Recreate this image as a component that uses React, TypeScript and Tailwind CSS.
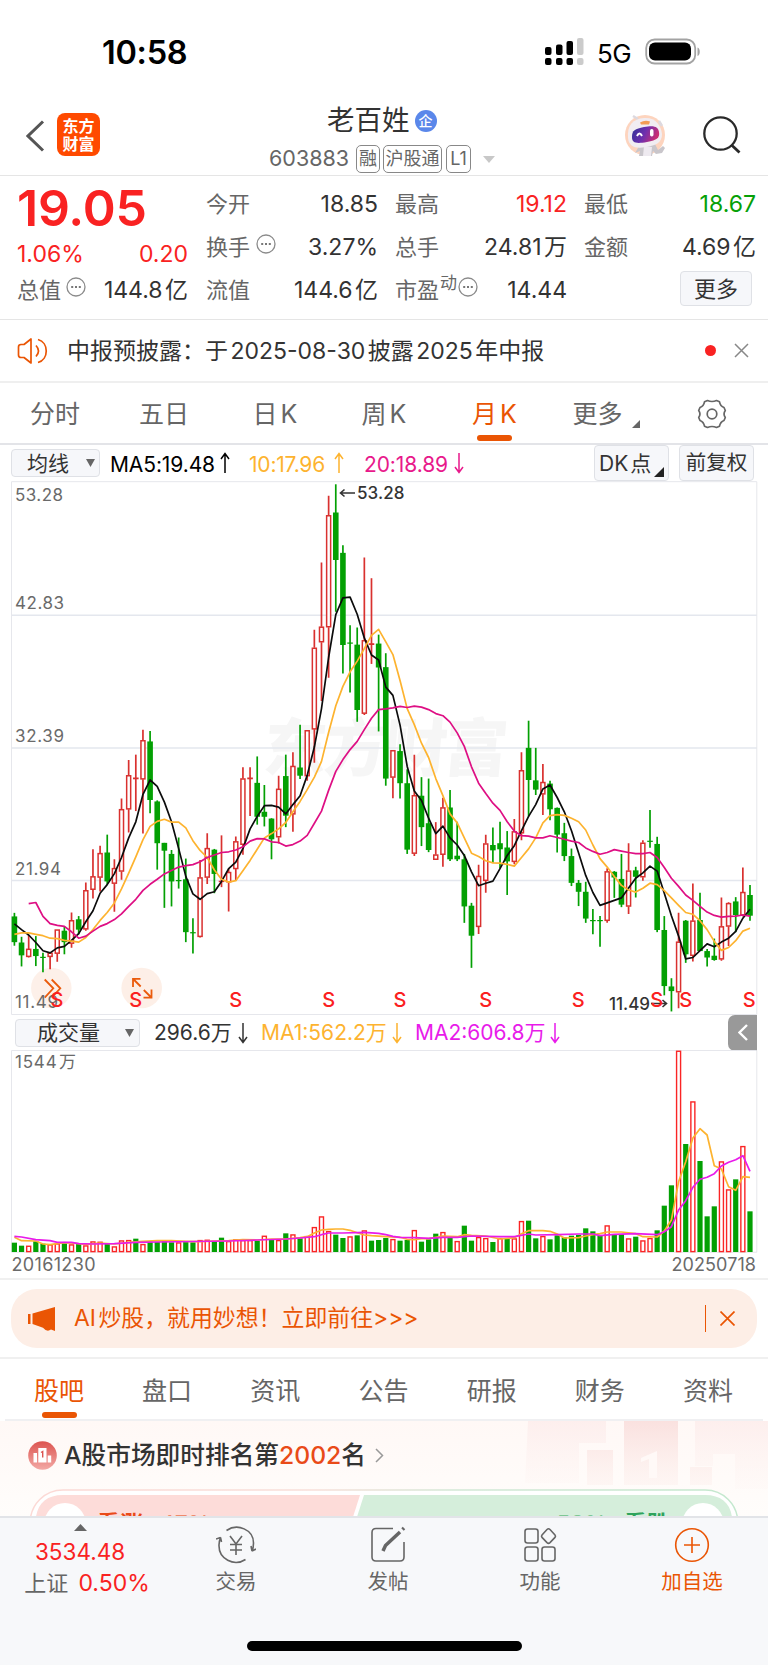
import type { ReactNode } from 'react';

type Candle = [kind: 'r' | 'g', high: number, top: number, bottom: number, low: number];

const STEP = 7.1417;
const X0 = 14.4;
const px = (i: number) => X0 + STEP * i;
const py = (v: number) => v / 2.8 - 11;
const vy = (v: number) => v / 3 - 40;

const CANDLES: Candle[] = [
  ['g', 1240, 1250, 1322, 1332], ['g', 1307, 1323, 1359, 1390], ['r', 1302, 1341, 1363, 1365], ['g', 1305, 1341, 1361, 1389],
  ['g', 1352, 1363, 1365, 1406], ['r', 1350, 1352, 1363, 1398], ['r', 1287, 1287, 1354, 1377], ['g', 1278, 1290, 1322, 1356],
  ['r', 1239, 1261, 1326, 1338], ['g', 1249, 1258, 1287, 1300], ['r', 1155, 1177, 1286, 1290], ['r', 1062, 1138, 1175, 1200],
  ['r', 1052, 1073, 1141, 1180], ['g', 1021, 1071, 1152, 1160], ['r', 1090, 1115, 1158, 1237], ['r', 920, 950, 1124, 1147],
  ['r', 812, 855, 950, 1015], ['r', 797, 861, 866, 955], ['r', 727, 757, 866, 1018], ['g', 731, 760, 924, 961],
  ['g', 925, 928, 1045, 1119], ['g', 1044, 1044, 1066, 1226], ['g', 1064, 1075, 1152, 1222], ['g', 1029, 1148, 1150, 1172],
  ['g', 1088, 1146, 1294, 1322], ['g', 1255, 1294, 1296, 1354], ['r', 1092, 1141, 1307, 1309], ['r', 1017, 1059, 1141, 1159],
  ['g', 1061, 1063, 1131, 1185], ['r', 1023, 1150, 1154, 1168], ['r', 1115, 1126, 1154, 1236], ['r', 1026, 1040, 1117, 1150],
  ['r', 832, 864, 1049, 1077], ['r', 832, 861, 866, 969], ['g', 802, 876, 971, 993], ['g', 882, 957, 971, 998],
  ['g', 975, 976, 1034, 1090], ['r', 856, 893, 1028, 1046], ['g', 797, 857, 968, 1000], ['r', 790, 829, 964, 1013],
  ['g', 713, 833, 856, 865], ['r', 729, 729, 857, 870], ['r', 447, 498, 726, 820], ['r', 259, 439, 482, 647],
  ['r', 72, 127, 440, 582], ['g', 40, 119, 252, 397], ['g', 211, 232, 490, 570], ['g', 435, 483, 485, 623],
  ['g', 441, 489, 672, 705], ['r', 245, 477, 682, 686], ['r', 303, 485, 490, 543], ['g', 461, 486, 553, 732],
  ['g', 513, 552, 864, 884], ['r', 785, 785, 861, 919], ['g', 768, 787, 877, 920], ['g', 838, 877, 1063, 1075],
  ['r', 797, 911, 1074, 1081], ['g', 860, 912, 1000, 1053], ['g', 864, 989, 1064, 1070], ['r', 986, 1077, 1091, 1091],
  ['r', 918, 945, 1077, 1111], ['g', 896, 945, 1090, 1095], ['g', 985, 1080, 1090, 1095], ['g', 1075, 1090, 1222, 1268],
  ['g', 1212, 1220, 1304, 1394], ['r', 1105, 1137, 1279, 1299], ['r', 1021, 1046, 1150, 1184], ['g', 1001, 1050, 1065, 1100],
  ['g', 985, 1045, 1062, 1115], ['g', 1011, 1057, 1096, 1190], ['r', 977, 1012, 1097, 1104], ['r', 790, 841, 1017, 1037],
  ['g', 702, 778, 868, 970], ['g', 778, 869, 895, 910], ['r', 823, 874, 908, 966], ['g', 870, 878, 950, 981],
  ['g', 945, 946, 1021, 1071], ['g', 988, 1017, 1081, 1095], ['g', 1060, 1081, 1156, 1165], ['g', 1148, 1156, 1181, 1221],
  ['g', 1153, 1181, 1256, 1268], ['g', 1229, 1260, 1262, 1300], ['g', 1249, 1260, 1263, 1335], ['r', 1115, 1124, 1262, 1268],
  ['g', 1123, 1125, 1141, 1198], ['g', 1075, 1145, 1217, 1224], ['r', 1045, 1122, 1222, 1243], ['g', 1111, 1121, 1139, 1197],
  ['r', 1037, 1044, 1140, 1150], ['g', 952, 1038, 1041, 1058], ['g', 1027, 1047, 1288, 1294], ['g', 1249, 1288, 1445, 1471],
  ['g', 1423, 1446, 1459, 1516], ['r', 1240, 1321, 1462, 1507], ['g', 1260, 1262, 1356, 1380], ['r', 1158, 1262, 1360, 1376],
  ['g', 1184, 1260, 1347, 1347], ['g', 1341, 1347, 1365, 1390], ['g', 1312, 1360, 1372, 1374], ['r', 1197, 1278, 1370, 1374],
  ['r', 1210, 1213, 1278, 1333], ['g', 1196, 1208, 1246, 1294], ['r', 1113, 1182, 1247, 1250], ['g', 1162, 1190, 1248, 1262],
];

const MA5 = [
  1271, 1287, 1302, 1323, 1346, 1352, 1338, 1334, 1317, 1298, 1265, 1234, 1185, 1161, 1130, 1085, 1030, 985, 908, 868, 886, 930, 985,
  1060, 1138, 1187, 1202, 1186, 1181, 1152, 1116, 1098, 1060, 1005, 970, 940, 939, 944, 963, 937, 912, 855, 775, 668, 525, 405, 358,
  356, 404, 470, 518, 532, 608, 631, 715, 830, 899, 925, 975, 1018, 997, 1030, 1050, 1079, 1125, 1164, 1157, 1151, 1116, 1079, 1052,
  1010, 970, 937, 893, 882, 917, 957, 1010, 1072, 1135, 1183, 1219, 1212, 1205, 1198, 1170, 1143, 1128, 1109, 1123, 1185, 1248, 1305,
  1369, 1365, 1346, 1327, 1335, 1322, 1311, 1292, 1255, 1230,
];
const MA10 = [
  1300, 1296, 1296, 1300, 1304, 1311, 1312, 1317, 1319, 1322, 1309, 1287, 1261, 1239, 1212, 1173, 1129, 1083, 1035, 998, 984, 978, 986,
  986, 1002, 1038, 1065, 1085, 1120, 1146, 1154, 1150, 1122, 1093, 1062, 1030, 1018, 1005, 987, 957, 928, 895, 860, 816, 735, 660, 606,
  565, 535, 500, 463, 446, 481, 517, 590, 668, 713, 765, 805, 864, 912, 963, 988, 1030, 1073, 1082, 1094, 1100, 1101, 1104, 1109, 1085,
  1061, 1030, 988, 968, 965, 967, 975, 985, 1008, 1050, 1088, 1112, 1138, 1163, 1176, 1182, 1171, 1157, 1161, 1178, 1198, 1219, 1239,
  1244, 1262, 1287, 1320, 1345, 1337, 1318, 1291, 1283,
];
const MA20 = [
  1214, 1211, 1250, 1270, 1275, 1278, 1293, 1311, 1305, 1291, 1278, 1270, 1259, 1243, 1222, 1202, 1177, 1160, 1146, 1131, 1121, 1112,
  1108, 1105, 1097, 1085, 1078, 1071, 1069, 1064, 1055, 1039, 1032, 1033, 1041, 1043, 1053, 1049, 1039, 1023, 989, 955, 897, 844, 811,
  783, 760, 727, 695, 671, 669, 666, 662, 665, 661, 664, 671, 682, 688, 706, 736, 774, 831, 877, 906, 933, 953, 985, 1011, 1024, 1025,
  1030, 1030, 1024, 1029, 1034, 1039, 1043, 1058, 1068, 1076, 1071, 1063, 1067, 1071, 1074, 1074, 1071, 1085, 1113, 1143, 1166, 1190,
  1205, 1222, 1238, 1247, 1252, 1250, 1249, 1246, 1249,
];

const VOLUMES =
  'g698 g707 r707 g694 g701 r703 r700 g700 r703 g702 r706 r694 r695 g701 r709 r691 r690 g686 r702 g695 g696 g693 g697 r697 g695 g697 r690 r689 g693 g683 r693 r688 r690 r690 g692 r677 g688 r690 g670 r673 g685 r678 r651 r619 r663 g674 g684 r679 g676 r661 g692 g690 g684 r687 g692 g690 r660 g695 g688 g671 r666 g682 r693 g647 g692 r681 r684 g696 r684 g686 r685 r633 g632 g685 r678 g688 g676 g682 g677 g675 g655 g664 g678 r646 g675 g672 r685 g680 r691 r684 g661 g587 g526 r122 g402 r274 g453 g619 g589 r454 r538 g508 r408 g604'.split(' ');

const VMA1: [number, number][] = [
  [0, 682], [1, 692], [3, 693], [4, 702], [5, 704], [6, 701], [7, 698], [8, 699], [10, 703], [12, 699], [14, 702], [16, 697], [18, 694],
  [20, 692], [22, 692], [24, 694], [26, 695], [28, 693], [30, 692], [32, 689], [34, 690], [36, 687], [38, 687], [39, 685], [40, 683],
  [41, 680], [42, 669], [43, 660], [44, 658], [45, 657], [46, 657], [47, 661], [48, 668], [49, 675], [50, 677], [52, 680], [54, 682],
  [55, 688], [56, 689], [57, 686], [58, 686], [60, 678], [62, 680], [63, 674], [64, 676], [66, 678], [68, 687], [70, 683], [71, 671],
  [72, 662], [74, 662], [75, 664], [76, 672], [77, 684], [79, 683], [80, 678], [81, 674], [82, 671], [83, 666], [85, 666], [87, 671],
  [88, 680], [90, 681], [91, 663], [92, 630], [93, 515], [94, 455], [95, 384], [96, 356], [97, 375], [98, 467], [99, 477], [100, 530],
  [101, 541], [102, 500], [103, 502],
];
const VMA2: [number, number][] = [
  [0, 679], [1, 681], [3, 689], [5, 692], [6, 697], [8, 697], [9, 701], [11, 702], [14, 701], [17, 697], [20, 696], [30, 693], [34, 690],
  [38, 687], [40, 684], [42, 680], [43, 674], [44, 669], [46, 669], [49, 667], [51, 670], [52, 674], [53, 679], [54, 682], [56, 683],
  [58, 685], [60, 682], [62, 682], [64, 678], [68, 680], [70, 680], [72, 672], [73, 675], [76, 674], [79, 672], [81, 672], [82, 677],
  [84, 673], [87, 671], [90, 674], [91, 665], [92, 650], [93, 600], [94, 572], [95, 532], [96, 508], [97, 502], [98, 491], [99, 468],
  [100, 457], [101, 449], [102, 437], [103, 484],
];

const line = (values: number[], start = 0) => values.map((v, i) => `${px(i + start).toFixed(1)},${py(v).toFixed(1)}`).join(' ');
const volLine = (points: [number, number][]) => points.map(([i, v]) => `${px(i).toFixed(1)},${vy(v).toFixed(1)}`).join(' ');

const GREEN = '#03a003';
const RED = '#d9312f';

function Label({ x, y, w, size = 17, children, fill = '#6a6a6a', weight = 400 }: { x: number; y: number; w: number; size?: number; children: ReactNode; fill?: string; weight?: number }) {
  return (
    <text x={x} y={y} textLength={w} fontSize={size} fill={fill} fontWeight={weight}>
      {children}
    </text>
  );
}

function PriceChart() {
  return (
    <svg width="768" height="534" viewBox="0 0 768 534" className="block">
      <g fill="#f6f6f6" transform="translate(262 290) skewX(-5)">
        <text textLength="244" fontSize="63" fontWeight="900">东方财富</text>
      </g>
      <path d="M11.3 134.3H757M11.3 267H757M11.3 399.4H757" stroke="#e4e7ee" strokeWidth="1.5" />
      <path d="M11.5 0.7H756.8V533.5H11.5Z" fill="none" stroke="#e6e7ec" />
      <Label x={15} y={19.5} w={48}>53.28</Label>
      <Label x={15} y={128} w={49}>42.83</Label>
      <Label x={15} y={261.3} w={49}>32.39</Label>
      <Label x={15} y={393.8} w={46}>21.94</Label>
      <circle cx="51.3" cy="507" r="20.3" fill="#fdeee6" fillOpacity="0.88" />
      <circle cx="141.7" cy="507" r="20.3" fill="#fdeee6" fillOpacity="0.95" />
      <Label x={15} y={527.3} w={43}>11.49</Label>
      <g fill="none" stroke="#ea5b0c" strokeWidth="1.8">
        <path d="M44.7 498.5l8.6 8.8-8.6 9.3M51.7 498.5l8.6 8.8-8.6 9.3" />
        <path d="M133 506v-8.200h7.500M133.200 498l7.500 7.500M151.500 508.500v8.200h-8M151.300 516.500l-7.500-7.500" />
      </g>
      {CANDLES.map(([kind, high, top, bottom, low], i) => {
        const x = px(i);
        const y1 = py(top);
        const h = Math.max(py(bottom) - y1, 1.2);
        const hollow = kind === 'r' && h > 3;
        const color = kind === 'r' ? RED : GREEN;
        return (
          <g key={i} stroke={color} strokeWidth="1.700">
            {hollow ? (
              <>
                <path d={`M${x} ${py(high)}V${y1}M${x} ${y1 + h}V${py(low)}`} />
                <rect x={x - 2} y={y1 + 0.4} width="4" height={h - 0.8} fill="#fff" strokeWidth="1.500" />
              </>
            ) : (
              <>
                <path d={`M${x} ${py(high)}V${py(low)}`} />
                <rect x={x - 2.8} y={y1} width="5.6" height={h} fill={color} stroke="none" />
              </>
            )}
          </g>
        );
      })}
      <g fill="none" strokeWidth="1.700" strokeLinejoin="round">
        <polyline points={line(MA5)} stroke="#0c0c0c" />
        <polyline points={line(MA10)} stroke="#fdb32f" />
        <polyline points={line(MA20, 2)} stroke="#de0f84" />
      </g>
      <path d="M340.500 12h14.500M344.500 8.500L340.500 12l4 3.500M651 522.500h15M662.500 519l4 3.500-4 3.500" stroke="#333" strokeWidth="1.6" fill="none" />
      <Label x={357} y={17.700} w={47.500} fill="#333" weight={500}>53.28</Label>
      <Label x={609} y={528.500} w={41} fill="#333" weight={500}>11.49</Label>
      <g fill="#fb2020" fontSize="20" fontWeight="500" textAnchor="middle">
        {[57, 135.7, 235.7, 328.7, 400, 485.7, 578.3, 656.7, 685.7, 749.3].map((x) => (
          <text key={x} x={x} y="525.800">S</text>
        ))}
      </g>
    </svg>
  );
}

function VolumeChart() {
  return (
    <svg width="768" height="228" viewBox="0 0 768 228" className="block">
      <path d="M11.500 202.300V0.500H756.800V202.300Z" fill="none" stroke="#e6e7ec" />
      <Label x={15} y={17.800} w={61}>1544 万</Label>
      {VOLUMES.map((item, i) => {
        const y = vy(Number(item.slice(1)));
        const red = item[0] === 'r';
        return red ? (
          <rect key={i} x={px(i) - 2} y={y + 0.6} width="4" height={201 - y} fill="#fff" stroke="#fa2525" strokeWidth="1.400" />
        ) : (
          <rect key={i} x={px(i) - 2.6} y={y} width="5.200" height={202 - y} fill={GREEN} />
        );
      })}
      <g fill="none" strokeWidth="1.700" strokeLinejoin="round">
        <polyline points={volLine(VMA1)} stroke="#fdb32f" />
        <polyline points={volLine(VMA2)} stroke="#e81bea" />
      </g>
      <Label x={11.500} y={220.500} w={84} size={18}>20161230</Label>
      <Label x={671.500} y={220.500} w={84.500} size={18}>20250718</Label>
    </svg>
  );
}

function Dots({ className = '' }: { className?: string }) {
  return (
    <svg width="20" height="20" viewBox="0 0 20 20" className={`shrink-0 ${className}`}>
      <circle cx="10" cy="10" r="9" fill="none" stroke="#8b8b8b" strokeWidth="1.300" />
      <path d="M5.200 10h2M9 10h2M12.800 10h2" stroke="#777" strokeWidth="1.800" />
    </svg>
  );
}

function Arrow({ up = false, className = '' }: { up?: boolean; className?: string }) {
  return (
    <svg width="10" height="22" viewBox="0 0 10 22" className={`shrink-0 ${className}`} fill="none" stroke="currentColor" strokeWidth="1.500">
      {up ? <path d="M5 21V2M1 7l4-5.500L9 7" /> : <path d="M5 1v19M1 15l4 5.500L9 15" />}
    </svg>
  );
}

function Cell({ label, value, color = 'text-[#333]', children }: { label: string; value: string; color?: string; children?: ReactNode }) {
  return (
    <div className="flex h-[43px] items-center">
      <span className="-mt-[2px] text-[22px] text-[#666]">{label}</span>
      {children}
      <span className={`ml-auto text-[23px] ${color}`}>{value}</span>
    </div>
  );
}

function Tab({ label, active = false, width, bar = 'mt-[3px]' }: { label: string; active?: boolean; width: string; bar?: string }) {
  return (
    <div className={`flex shrink-0 flex-col items-center ${width}`}>
      <span className={`text-[25px] leading-[36px] whitespace-nowrap ${active ? 'text-[#ea5504]' : 'text-[#666]'}`}>{label}</span>
      {active && <span className={`h-[6px] w-[35px] rounded-full bg-[#ea5504] ${bar}`} />}
    </div>
  );
}

function NavItem({ label, color = 'text-[#666]', children }: { label: string; color?: string; children: ReactNode }) {
  return (
    <div className={`flex w-[152px] flex-col items-center pt-[7px] ${color}`}>
      <svg width="40" height="40" viewBox="0 0 40 40" fill="none" stroke="currentColor" strokeWidth="1.600">
        {children}
      </svg>
      <span className="mt-[4px] text-[20.500px] leading-[26px]">{label}</span>
    </div>
  );
}

export default function App() {
  return (
    <div lang="zh-CN" className="h-[1665px] w-[768px] overflow-hidden bg-white font-['Inter','Noto_Sans_CJK_SC',sans-serif] leading-none whitespace-nowrap text-[#333] [word-spacing:-4px]">
      <div className="flex h-[104px] items-center pl-[102px]">
        <span className="mt-[2px] w-[84px] text-[32.500px] font-semibold tracking-[-0.3px] text-black">10:58</span>
        <svg width="40" height="30" viewBox="0 0 40 30" className="ml-[359px]">
          <g fill="#000">
            <rect x="0" y="10" width="6.500" height="8" rx="2" /><rect x="11" y="7.500" width="6.500" height="10.500" rx="2" />
            <rect x="21.500" y="4" width="6.500" height="14" rx="2" />
            <rect x="0" y="21" width="6.500" height="7" rx="2" /><rect x="11" y="21" width="6.500" height="7" rx="2" />
            <rect x="21.500" y="21" width="6.500" height="7" rx="2" />
          </g>
          <g fill="#cbcbcb"><rect x="32" y="1" width="6.500" height="17" rx="2" /><rect x="32" y="21" width="6.500" height="7" rx="2" /></g>
        </svg>
        <span className="mt-[3px] ml-[12px] w-[35px] text-[26px] tracking-[-0.5px] text-black">5G</span>
        <svg width="58" height="28" viewBox="0 0 58 28" className="ml-[13px]">
          <rect x="1.200" y="1.500" width="49" height="24" rx="8.500" fill="none" stroke="#a3a3a3" strokeWidth="1.800" />
          <rect x="4" y="4.500" width="42" height="18" rx="6" /><path d="M52.500 9.500c3 1 3 7.500 0 8.500z" fill="#a3a3a3" />
        </svg>
      </div>

      <header className="flex h-[72px] border-b border-[#e5e5e5]">
        <svg width="19" height="32" viewBox="0 0 19 32" fill="none" stroke="#555" strokeWidth="3" className="mt-[16px] ml-[26px]"><path d="M17 1.500L2 16l15 14.500" /></svg>
        <div className="mt-[9px] ml-[12px] flex h-[43px] w-[43px] flex-col items-center justify-center rounded-[8px] bg-[#ff4a00] text-[16px] leading-[18px] font-bold text-white">
          <span>东方</span><span>财富</span>
        </div>
        <div className="ml-[160px] w-[245px] pt-[3px] pl-[9px]">
          <div className="flex h-[28px] items-center pl-[58px]">
            <span className="text-[27.500px] text-[#333]">老百姓</span>
            <span className="ml-[5px] flex h-[22px] w-[22px] items-center justify-center rounded-full bg-[#5a87ea] text-[14px] font-medium text-white">企</span>
          </div>
          <div className="mt-[10px] flex h-[28px] items-center text-[20px] text-[#666]">
            <span className="w-[82px] pl-0 text-[21.500px]">603883</span>
            <span className="ml-[5px] flex h-[28px] w-[24px] items-center justify-center rounded-[5px] border border-[#888] text-[18px]">融</span>
            <span className="ml-[3px] flex h-[28px] w-[59px] items-center justify-center rounded-[5px] border border-[#888] text-[18px]">沪股通</span>
            <span className="ml-[4px] flex h-[28px] w-[25px] shrink-0 items-center justify-center rounded-[5px] border border-[#888] text-[18px]">L1</span>
            <svg width="12" height="7" viewBox="0 0 12 7" className="ml-[12px] shrink-0"><path d="M0 0h12L6 7z" fill="#c8c8c8" /></svg>
          </div>
        </div>
        <svg width="42" height="44" viewBox="0 0 42 44" className="mt-[10px] ml-[119px] shrink-0">
          <defs><linearGradient id="visor" x1="0" y1="0" x2="1" y2="0.300"><stop stopColor="#2d3296" /><stop offset="0.550" stopColor="#6f2fae" /><stop offset="1" stopColor="#c92f74" /></linearGradient></defs>
          <circle cx="21" cy="21" r="20" fill="#fdd4be" />
          <path d="M9 2l5 3M35 7l3 5" stroke="#ddd9df" strokeWidth="2.500" />
          <path d="M17 29l14 1 3 6 5-4 2 2-3 5-6 1-3-3-1 5H15l1-5-5 2z" fill="#c9c6cb" />
          <path d="M20 32l8 1-1 9h-8z" fill="#eeeaf0" />
          <path d="M4 24C3 11 9 5 20 4s17 7 18 16c0 9-6 11-16 13-10 2-17 0-18-9z" fill="#f1edf2" />
          <path d="M16 8.500q5-3 10-1l-1 3h-8z" fill="#f29d55" />
          <path d="M8 23c0-7 3-8 12-10 11-2 14 0 15 5 1 6-2 8-12 10-11 2-15 1-15-5z" fill="url(#visor)" />
          <path d="M13 22q2.500-5 5 0" fill="none" stroke="#fff" strokeWidth="2" /><rect x="26" y="15" width="3.500" height="7.500" rx="1.700" fill="#fff" />
        </svg>
        <svg width="40" height="40" viewBox="0 0 40 40" className="mt-[12px] ml-[37px] shrink-0" fill="none" stroke="#2a2a2a" strokeWidth="2.300">
          <circle cx="17.500" cy="17.500" r="16.200" /><path d="M28.500 29l8 7.500" strokeWidth="2.800" />
        </svg>
      </header>

      <section className="flex h-[144px] border-b border-[#e5e5e5] pl-[17px]">
        <div className="w-[171px] pt-[7px]">
          <div className="flex h-[49px] items-center text-[50px] font-semibold tracking-[-0.2px] text-[#f92222]">19.05</div>
          <div className="mt-[5px] flex h-[34px] items-center justify-between text-[23px] text-[#f92222]">
            <span>1.06%</span><span>0.20</span>
          </div>
          <div className="-mt-[2px]"><Cell label="总值" value="144.8 亿"><Dots className="-mt-[8px] ml-[5px]" /></Cell></div>
        </div>
        <div className="ml-[18px] w-[172px] pt-[7px]">
          <Cell label="今开" value="18.85" />
          <Cell label="换手" value="3.27%"><Dots className="-mt-[8px] ml-[6px]" /></Cell>
          <Cell label="流值" value="144.6 亿" />
        </div>
        <div className="ml-[17px] w-[172px] pt-[7px]">
          <Cell label="最高" value="19.12" color="text-[#f92222]" />
          <Cell label="总手" value="24.81 万" />
          <Cell label="市盈" value="14.44"><span className="-mt-[14px] ml-[1px] text-[17px] text-[#666]">动</span><Dots className="-mt-[8px] ml-[1px]" /></Cell>
        </div>
        <div className="ml-[17px] w-[172px] pt-[7px]">
          <Cell label="最低" value="18.67" color="text-[#06a006]" />
          <Cell label="金额" value="4.69 亿" />
          <div className="mt-[2px] mr-[4px] ml-auto flex h-[35px] w-[72px] items-center justify-center rounded-[4px] border border-[#dfe1e6] bg-[#f6f7fa] text-[22px]">更多</div>
        </div>
      </section>

      <section className="flex h-[63px] items-center border-b-2 border-[#efefef] pl-[17px]">
        <svg width="32" height="28" viewBox="0 0 32 28" fill="none" stroke="#ea5504" strokeWidth="1.700" strokeLinejoin="round">
          <path d="M1.500 10q0-2.500 2.500-2.500h3l7-5.500v24l-7-5.500H4q-2.500 0-2.500-2.500zM19 8.500q5 5.500 0 11M21 2.500c11 3 11 20 0 23" />
        </svg>
        <span className="mt-[1px] ml-[18px] w-[482px] text-[23px]">中报预披露：于 2025-08-30 披露 2025 年中报</span>
        <span className="ml-[156px] h-[11px] w-[11px] rounded-full bg-[#f92222]" />
        <svg width="15" height="15" viewBox="0 0 15 15" stroke="#888" strokeWidth="1.500" className="ml-[18px]"><path d="M1 1l13 13M14 1L1 14" /></svg>
      </section>

      <nav className="flex h-[62px] border-b-2 border-[#e3e4e8] pt-[13px]">
        <Tab label="分时" width="w-[110px]" />
        <Tab label="五日" width="w-[108px]" />
        <Tab label="日 K" width="w-[114px]" />
        <Tab label="周 K" width="w-[104px]" />
        <Tab label="月 K" width="w-[117px]" active />
        <Tab label="更多" width="w-[89px]" />
        <svg width="8" height="8" viewBox="0 0 8 8" className="mt-[24px] -ml-[10px]"><path d="M8 0v8H0z" fill="#666" /></svg>
        <svg width="30" height="30" viewBox="0 0 30 30" fill="none" stroke="#666" strokeWidth="1.700" strokeLinejoin="round" className="mt-[3px] ml-[57px]">
          <path d="M10.500 1.500q4.500 2 9 0l3 1.300q.8 4.300 4.500 5.700l1.300 3q-2.500 3.500 0 7l-1.300 3q-3.700 1.400-4.500 5.700l-3 1.300q-4.500-2-9 0l-3-1.300Q6.700 22.900 3 21.500l-1.300-3q2.500-3.500 0-7L3 8.500q3.700-1.400 4.500-5.700z" />
          <circle cx="15" cy="15" r="4.800" />
        </svg>
      </nav>

      <div className="flex h-[36px] items-center">
        <div className="ml-[11px] flex h-[28px] w-[89px] items-center rounded-[4px] border border-[#dfe1e6] bg-[#f6f7fa] pl-[15px] text-[21px]">
          均线<svg width="9" height="8" viewBox="0 0 9 8" className="ml-[17px]"><path d="M0 0h9L4.500 8z" fill="#666" /></svg>
        </div>
        <span className="mt-[2px] ml-[10px] w-[105px] text-[21px] tracking-[-0.1px] text-black">MA5:19.48</span><Arrow up className="ml-[5px] text-black" />
        <span className="mt-[2px] ml-[19px] w-[80px] text-[21px] tracking-[-0.2px] text-[#fdb32f]">10:17.96</span><Arrow up className="ml-[5px] text-[#fdb32f]" />
        <span className="mt-[2px] ml-[20px] w-[84px] text-[21px] tracking-[-0.1px] text-[#e8198b]">20:18.89</span><Arrow className="ml-[6px] text-[#e8198b]" />
        <div className="ml-auto flex h-[36px] w-[75px] items-center rounded-[4px] border border-[#dfe1e6] bg-[#f6f7fa] pl-[4px] text-[21px]">
          DK 点<svg width="10" height="10" viewBox="0 0 10 10" className="mt-[18px] ml-[3px] shrink-0"><path d="M10 0v10H0z" fill="#222" /></svg>
        </div>
        <div className="mr-[14px] ml-[10px] flex h-[36px] w-[75px] items-center justify-center rounded-[4px] border border-[#dfe1e6] bg-[#f6f7fa] text-[20.500px]">前复权</div>
      </div>

      <PriceChart />

      <div className="flex h-[35px] items-center">
        <div className="ml-[15px] flex h-[28px] w-[125px] items-center rounded-[4px] border border-[#dfe1e6] bg-[#f6f7fa] pl-[21px] text-[21px]">
          成交量<svg width="9" height="8" viewBox="0 0 9 8" className="ml-[25px]"><path d="M0 0h9L4.500 8z" fill="#666" /></svg>
        </div>
        <span className="ml-[14px] w-[78px] text-[21px]">296.6万</span><Arrow className="ml-[6px]" />
        <span className="ml-[13px] w-[126px] text-[21px] text-[#fdb32f]">MA1:562.2万</span><Arrow className="ml-[5px] text-[#fdb32f]" />
        <span className="ml-[13px] w-[129px] text-[21px] text-[#e81bea]">MA2:606.8万</span><Arrow className="ml-[6px] text-[#e81bea]" />
        <div className="ml-auto mr-[11px] flex h-[36px] w-[29px] items-center justify-center rounded-l-[7px] bg-[#999]">
          <svg width="10" height="17" viewBox="0 0 10 17" fill="none" stroke="#fff" strokeWidth="2.400"><path d="M9 1L1.500 8.500 9 16" /></svg>
        </div>
      </div>

      <VolumeChart />

      <div className="h-[81px] border-y-2 border-[#f0f0f0] px-[11px] pt-[9px]">
        <div className="flex h-[59px] items-center rounded-[26px] bg-[#fdeee6] pl-[17px] text-[#ea5504]">
          <svg width="28" height="24" viewBox="0 0 28 24" fill="#ea5504"><path d="M0 7h2.500v10H0zM4.500 6.500L27 0v24l-4-1.500q-4 3-8-1.800L4.500 17z" /></svg>
          <span className="ml-[18px] text-[22.900px]">AI 炒股，就用妙想！立即前往&gt;&gt;&gt;</span>
          <span className="ml-auto h-[27px] w-[1.500px] bg-[#ea5504]" />
          <svg width="15" height="15" viewBox="0 0 15 15" stroke="#ea5504" strokeWidth="1.700" className="mr-[22px] ml-[14px]"><path d="M0.500 0.500l14 14M14.500 0.500l-14 14" /></svg>
        </div>
      </div>

      <nav className="mx-[5px] flex h-[62px] border-b-2 border-[#f0f0f2] pt-[14px]">
        <Tab label="股吧" width="w-[108px]" active />
        {['盘口', '资讯', '公告', '研报', '财务', '资料'].map((label) => (
          <Tab key={label} label={label} width="w-[108.200px]" />
        ))}
      </nav>

      <section className="relative h-[95px] overflow-hidden bg-gradient-to-b from-[#fff8f6] to-[#fffdfb]">
        <svg width="243" height="70" viewBox="0 0 243 70" className="absolute top-0 right-0">
          <defs>
            <linearGradient id="fade" x1="0" y1="0" x2="0" y2="1"><stop stopColor="#f8d9d7" stopOpacity="0.750" /><stop offset="1" stopColor="#fbe9e6" stopOpacity="0.300" /></linearGradient>
            <linearGradient id="faint" x1="0" y1="0" x2="0" y2="1"><stop stopColor="#fcebea" stopOpacity="0.750" /><stop offset="1" stopColor="#fdf3f1" stopOpacity="0.200" /></linearGradient>
          </defs>
          <path d="M3 0h78v22H54v40H0zM170 0h73v68h-33V33h-22v12h-18z" fill="url(#faint)" />
          <path d="M62 29h26v35H62zM99 0h54v64H99zM165 46h22v18h-22z" fill="url(#fade)" />
          <path d="M116 37l16-7v27h-8V38l-8 3z" fill="#fff9f7" />
        </svg>
        <div className="relative flex h-[69px] items-center pl-[28px]">
          <svg width="29" height="29" viewBox="0 0 29 29">
            <defs><linearGradient id="badge" x1="0" y1="0" x2="0" y2="1"><stop stopColor="#dc5450" /><stop offset="1" stopColor="#f3a9a5" /></linearGradient></defs>
            <circle cx="14.500" cy="14.500" r="14.300" fill="url(#badge)" />
            <path d="M5.500 12h3.500v9.500H5.500zM10.300 7h8.200v14.500h-8.200zM19.700 14.500h3.500v7h-3.500z" fill="#fff" />
            <path d="M13 11.500l1.700-1v6" fill="none" stroke="#dc5450" strokeWidth="1.400" />
          </svg>
          <span className="ml-[7px] text-[24.700px] font-medium">A股市场即时排名第<span className="text-[#e94a18]">2002</span>名</span>
          <svg width="9" height="15" viewBox="0 0 9 15" fill="none" stroke="#999" strokeWidth="1.500" className="ml-[9px]"><path d="M1 1l6.500 6.500L1 14" /></svg>
        </div>
        <svg width="710" height="28" viewBox="0 0 710 28" className="absolute top-[68px] left-[29px]">
          <defs><linearGradient id="ring" x1="0" x2="1"><stop stopColor="#fcd9d5" /><stop offset="0.400" stopColor="#f8dfd9" /><stop offset="0.600" stopColor="#d3e8d6" /><stop offset="1" stopColor="#c4e8ce" /></linearGradient></defs>
          <path d="M1 35C1 15 16 1 34 1h642c18 0 33 14 33 34" fill="#fff" stroke="url(#ring)" strokeWidth="1.500" />
          <path d="M7 28C9 14 18 6 34 6H331L324 28z" fill="#fddcd9" /><path d="M335 6H676c16 0 25 8 27 22H328z" fill="#d5eedb" />
          <circle cx="36" cy="35" r="21" fill="#fff" /><circle cx="674" cy="35" r="21" fill="#fff" />
        </svg>
        <div className="relative mt-[23px] flex items-start pr-[98px] pl-[97px] text-[23px] font-bold">
          <span className="text-[#e94a18]">看涨</span><span className="ml-[17px] font-normal text-[#ef8a6c]">47%</span>
          <span className="ml-auto font-normal text-[#7fc795]">53%</span><span className="ml-[17px] text-[#2fa35c]">看跌</span>
        </div>
      </section>

      <footer className="h-[149px] border-t-2 border-[#e2e4e8] bg-[#f7f8fa]">
        <div className="flex h-[123px]">
          <div className="flex w-[160px] flex-col items-center pt-[6px]">
            <svg width="13" height="7" viewBox="0 0 13 7"><path d="M0 7L6.500 0 13 7z" fill="#666" /></svg>
            <span className="mt-[8px] text-[22.500px] leading-[26px] text-[#f92222]">3534.48</span>
            <span className="mt-[5px] ml-[14px] text-[22px] leading-[26px] text-[#666]">上证 <span className="ml-[8px] text-[23px] text-[#f92222]">0.50%</span></span>
          </div>
          <NavItem label="交易">
            <path d="M10.500 5.500c11-7.500 27-1 27 12.500 0 3-.5 6-1.500 8M36 26l4-2M36 26l-1-5M29.500 34.500C18 42 2.500 34 3 20c0-3 .5-5 1.500-7.500M4.500 12.500L0 14M4.500 12.500L5.500 17" />
            <path d="M14 11l6 8 6-8M20 19v11M14 19.500h12M14 25h12" />
          </NavItem>
          <NavItem label="发帖">
            <path d="M25 3.500H8q-4 0-4 4V32q0 4 4 4H32q4 0 4-4V17" />
            <path d="M15 26l2.500-5.500L32 7M34.500 4.500L36 3" strokeWidth="3.500" />
          </NavItem>
          <NavItem label="功能">
            <rect x="5" y="4" width="13" height="14" rx="2.500" /><rect x="5" y="22" width="13" height="14" rx="2.500" /><rect x="22" y="22" width="13" height="14" rx="2.500" />
            <path d="M27 4.500q1.500-1.500 3 0l5 5.500q1 1.200 0 2.400l-5 5.200q-1.500 1.400-3 0l-5-5.200q-1-1.200 0-2.400z" />
          </NavItem>
          <NavItem label="加自选" color="text-[#ea5504]">
            <circle cx="20" cy="20" r="16.300" /><path d="M12 20h16M20 12v16" />
          </NavItem>
        </div>
        <div className="ml-[247px] h-[10px] w-[275px] rounded-full bg-black" />
      </footer>
    </div>
  );
}
